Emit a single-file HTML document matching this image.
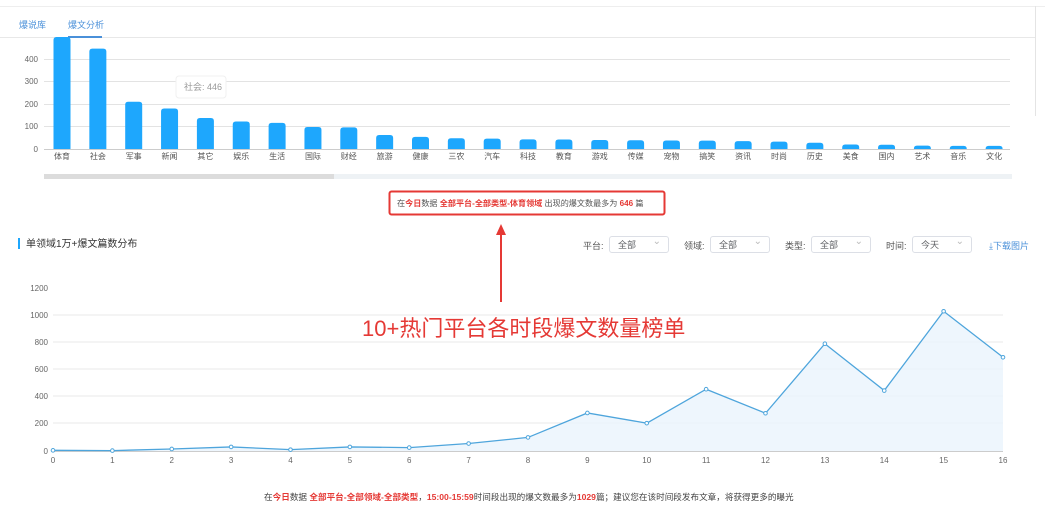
<!DOCTYPE html>
<html><head><meta charset="utf-8"><style>
body{margin:0;width:1045px;height:510px;background:#fff;overflow:hidden;font-family:"Liberation Sans","Noto Sans CJK SC",sans-serif;position:relative}
.a{position:absolute;white-space:nowrap}
.sel{position:absolute;top:236px;height:17px;border:1px solid #dcdfe6;border-radius:3px;font-size:9px;color:#606266;line-height:17px;padding-left:8px;box-sizing:border-box}
.sel:after{content:"⌄";position:absolute;right:7px;top:-4px;color:#bbb;font-size:10px}
.lb{position:absolute;top:239px;font-size:9px;color:#555}
</style></head><body>
<div class="a" style="left:0;top:6px;width:1045px;height:1px;background:#eee"></div>
<div class="a" style="left:1035px;top:6px;width:1px;height:110px;background:#e4e4e4"></div>
<div class="a" style="left:19px;top:18px;font-size:9px;color:#4a90d9">爆说库</div>
<div class="a" style="left:68px;top:18px;font-size:9px;color:#4a90d9">爆文分析</div>
<div class="a" style="left:0;top:37px;width:1035px;height:1px;background:#e8e8e8"></div>
<div class="a" style="left:68px;top:36px;width:34px;height:2px;background:#4a90d9"></div>
<svg class="a" style="left:0;top:0" width="1045" height="510">
<g stroke="#e3e3e3" stroke-width="1">
<line x1="44" y1="59.5" x2="1010" y2="59.5"/><line x1="44" y1="81.5" x2="1010" y2="81.5"/><line x1="44" y1="104.5" x2="1010" y2="104.5"/><line x1="44" y1="126.5" x2="1010" y2="126.5"/><line x1="44" y1="149.5" x2="1010" y2="149.5" stroke="#ccc"/>
</g>
<g font-size="8" fill="#666" text-anchor="end">
<text x="38" y="62">400</text><text x="38" y="84">300</text><text x="38" y="107">200</text><text x="38" y="129">100</text><text x="38" y="152">0</text>
</g>
<g fill="#1ea7fd" id="bars"></g>
<g font-size="8" fill="#555" text-anchor="middle" id="cats"></g>
<rect x="44" y="174" width="968" height="5" fill="#eef2f5"/>
<rect x="44" y="174" width="290" height="5" fill="#dcdcdc"/>
<rect x="176" y="76" width="50" height="22" rx="3" fill="#fff" stroke="#f0f0f0"/>
<text x="184" y="90" font-size="9" fill="#999">社会: 446</text>
<rect x="389.5" y="191.5" width="275" height="23" fill="#fff" stroke="#e53935" stroke-width="2" rx="2"/>
<text x="397" y="206" font-size="8.1" fill="#555">在<tspan fill="#e53935" font-weight="bold">今日</tspan>数据 <tspan fill="#e53935" font-weight="bold">全部平台-全部类型-体育领域</tspan> 出现的爆文数最多为 <tspan fill="#e53935" font-weight="bold">646</tspan> 篇</text>
<line x1="501" y1="302" x2="501" y2="232" stroke="#e53935" stroke-width="2"/>
<polygon points="501,224 496,235 506,235" fill="#e53935"/>
<rect x="18" y="238" width="2" height="11" fill="#1ea7fd"/>
<text x="26" y="247" font-size="10" fill="#333">单领域1万+爆文篇数分布</text>
<g stroke="#eaeaea"><line x1="53" y1="315" x2="1003" y2="315"/><line x1="53" y1="342" x2="1003" y2="342"/><line x1="53" y1="369" x2="1003" y2="369"/><line x1="53" y1="396" x2="1003" y2="396"/><line x1="53" y1="423" x2="1003" y2="423"/><line x1="53" y1="451.5" x2="1003" y2="451.5" stroke="#ccc"/></g>
<g font-size="8" fill="#666" text-anchor="end"><text x="48" y="291">1200</text><text x="48" y="318">1000</text><text x="48" y="345">800</text><text x="48" y="372">600</text><text x="48" y="399">400</text><text x="48" y="426">200</text><text x="48" y="454">0</text></g>
<g id="line"></g>
<text x="362" y="336" font-size="22" fill="#e53935">10+热门平台各时段爆文数量榜单</text>
<text x="264" y="500" font-size="8.6" fill="#444">在<tspan fill="#e53935" font-weight="bold">今日</tspan>数据 <tspan fill="#e53935" font-weight="bold">全部平台-全部领域-全部类型</tspan>，<tspan fill="#e53935" font-weight="bold">15:00-15:59</tspan>时间段出现的爆文数最多为<tspan fill="#e53935" font-weight="bold">1029</tspan>篇；建议您在该时间段发布文章，将获得更多的曝光</text>
</svg>
<div class="lb" style="left:583px">平台:</div><div class="sel" style="left:609px;width:60px">全部</div>
<div class="lb" style="left:684px">领域:</div><div class="sel" style="left:710px;width:60px">全部</div>
<div class="lb" style="left:785px">类型:</div><div class="sel" style="left:811px;width:60px">全部</div>
<div class="lb" style="left:886px">时间:</div><div class="sel" style="left:912px;width:60px">今天</div>
<div class="lb" style="left:989px;color:#4a90d9">⤓下载图片</div>
<script>
var c="体育 社会 军事 新闻 其它 娱乐 生活 国际 财经 旅游 健康 三农 汽车 科技 教育 游戏 传媒 宠物 搞笑 资讯 时尚 历史 美食 国内 艺术 音乐 文化".split(" ");
var v=[646,446,210,180,138,122,116,98,96,62,54,48,46,43,42,40,39,38,37,35,33,28,20,19,15,14,14];
var b="",t="";
for(var i=0;i<27;i++){var x=62+i*35.85,h=Math.min(v[i]*0.225,112),y=149-h;
b+='<path d="M'+(x-8.5)+' 149V'+(y+3)+'q0-3 3-3h11q3 0 3 3V149z"/>';
t+='<text x="'+x+'" y="159">'+c[i]+'</text>';}
document.getElementById("bars").innerHTML=b;document.getElementById("cats").innerHTML=t;
var d=[5,3,15,30,10,30,25,55,100,280,205,455,278,790,445,1029,690],p=[],s="",l="";
for(var i=0;i<17;i++){var x=53+i*59.375,y=451-d[i]*0.1358;p.push(x+","+y);
s+='<circle cx="'+x+'" cy="'+y+'" r="1.8" fill="#fff" stroke="#4ea5dc"/>';
l+='<text x="'+x+'" y="463" font-size="8" fill="#666" text-anchor="middle">'+i+'</text>';}
document.getElementById("line").innerHTML='<polygon points="53,451 '+p.join(" ")+' 1003,451" fill="#eaf4fc" opacity="0.8"/><polyline points="'+p.join(" ")+'" fill="none" stroke="#4ea5dc" stroke-width="1.3"/>'+s+l;
</script>
</body></html>
